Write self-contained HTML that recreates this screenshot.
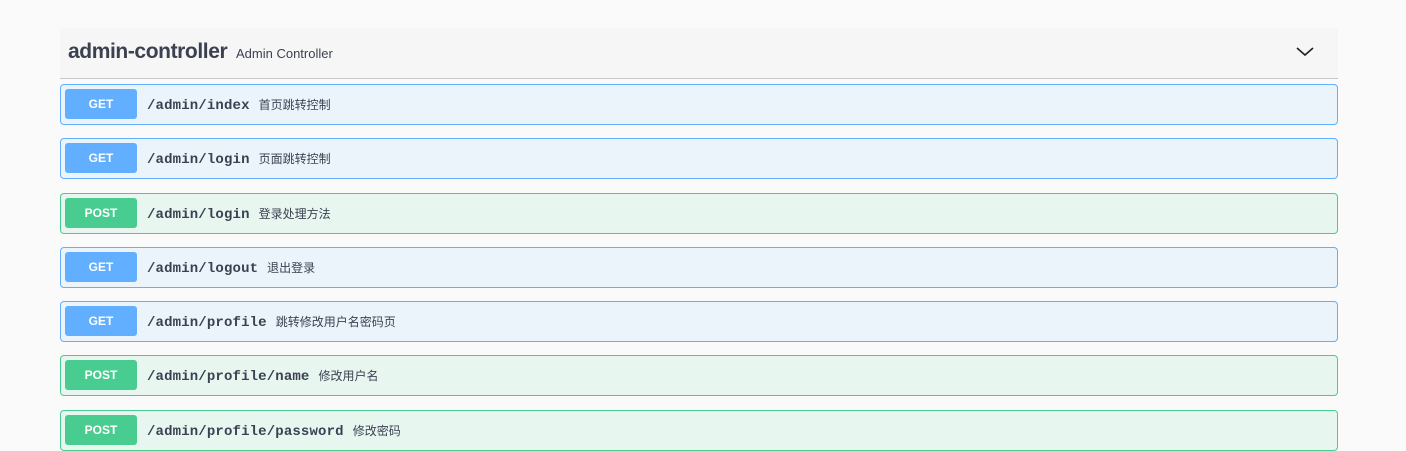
<!DOCTYPE html>
<html><head><meta charset="utf-8"><style>
body{margin:0;width:1406px;height:450px;background:#fafafa;overflow:hidden;font-family:"Liberation Sans","Noto Sans CJK SC",sans-serif;position:relative}
.hd{position:absolute;left:60px;top:28px;width:1278px;height:50px;background:#f6f6f6;border-bottom:1px solid #c8c8c8}
.hd .t{position:absolute;left:8px;top:12px;font-size:21px;font-weight:bold;color:#3b4151;letter-spacing:-0.4px}
.hd .s{position:absolute;left:176px;top:18px;font-size:13px;color:#3b4151}
.hd svg{position:absolute;left:1236px;top:18px}
.op{position:absolute;left:60px;width:1276px;height:39px;border:1px solid;border-radius:4px}
.get{background:#ebf3fb;border-color:#61affe}
.post{background:#e8f6f0;border-color:#49cc90}
.b{position:absolute;left:4px;top:4px;width:72px;height:30px;border-radius:3px;color:#fff;font-weight:bold;font-size:12px;line-height:30px;text-align:center}
.get .b{background:#61affe}.post .b{background:#49cc90}
.p{position:absolute;left:86px;top:11px;font-family:"Liberation Mono",monospace;font-weight:bold;font-size:14px;color:#3b4151;letter-spacing:0.15px}
.p span{font-family:"Liberation Sans","Noto Sans CJK SC",sans-serif;font-weight:normal;font-size:12px;margin-left:9px;letter-spacing:0}
</style></head><body>
<div class="hd"><div class="t">admin-controller</div><div class="s">Admin Controller</div>
<svg width="18" height="12" viewBox="0 0 18 12"><path d="M1 2l8 7 8-7" fill="none" stroke="#222" stroke-width="1.6"/></svg></div>
<div class="op get" style="top:84px"><div class="b">GET</div><div class="p">/admin/index<span>首页跳转控制</span></div></div>
<div class="op get" style="top:138px"><div class="b">GET</div><div class="p">/admin/login<span>页面跳转控制</span></div></div>
<div class="op post" style="top:193px"><div class="b">POST</div><div class="p">/admin/login<span>登录处理方法</span></div></div>
<div class="op get" style="top:247px"><div class="b">GET</div><div class="p">/admin/logout<span>退出登录</span></div></div>
<div class="op get" style="top:301px"><div class="b">GET</div><div class="p">/admin/profile<span>跳转修改用户名密码页</span></div></div>
<div class="op post" style="top:355px"><div class="b">POST</div><div class="p">/admin/profile/name<span>修改用户名</span></div></div>
<div class="op post" style="top:410px"><div class="b">POST</div><div class="p">/admin/profile/password<span>修改密码</span></div></div>
</body></html>
